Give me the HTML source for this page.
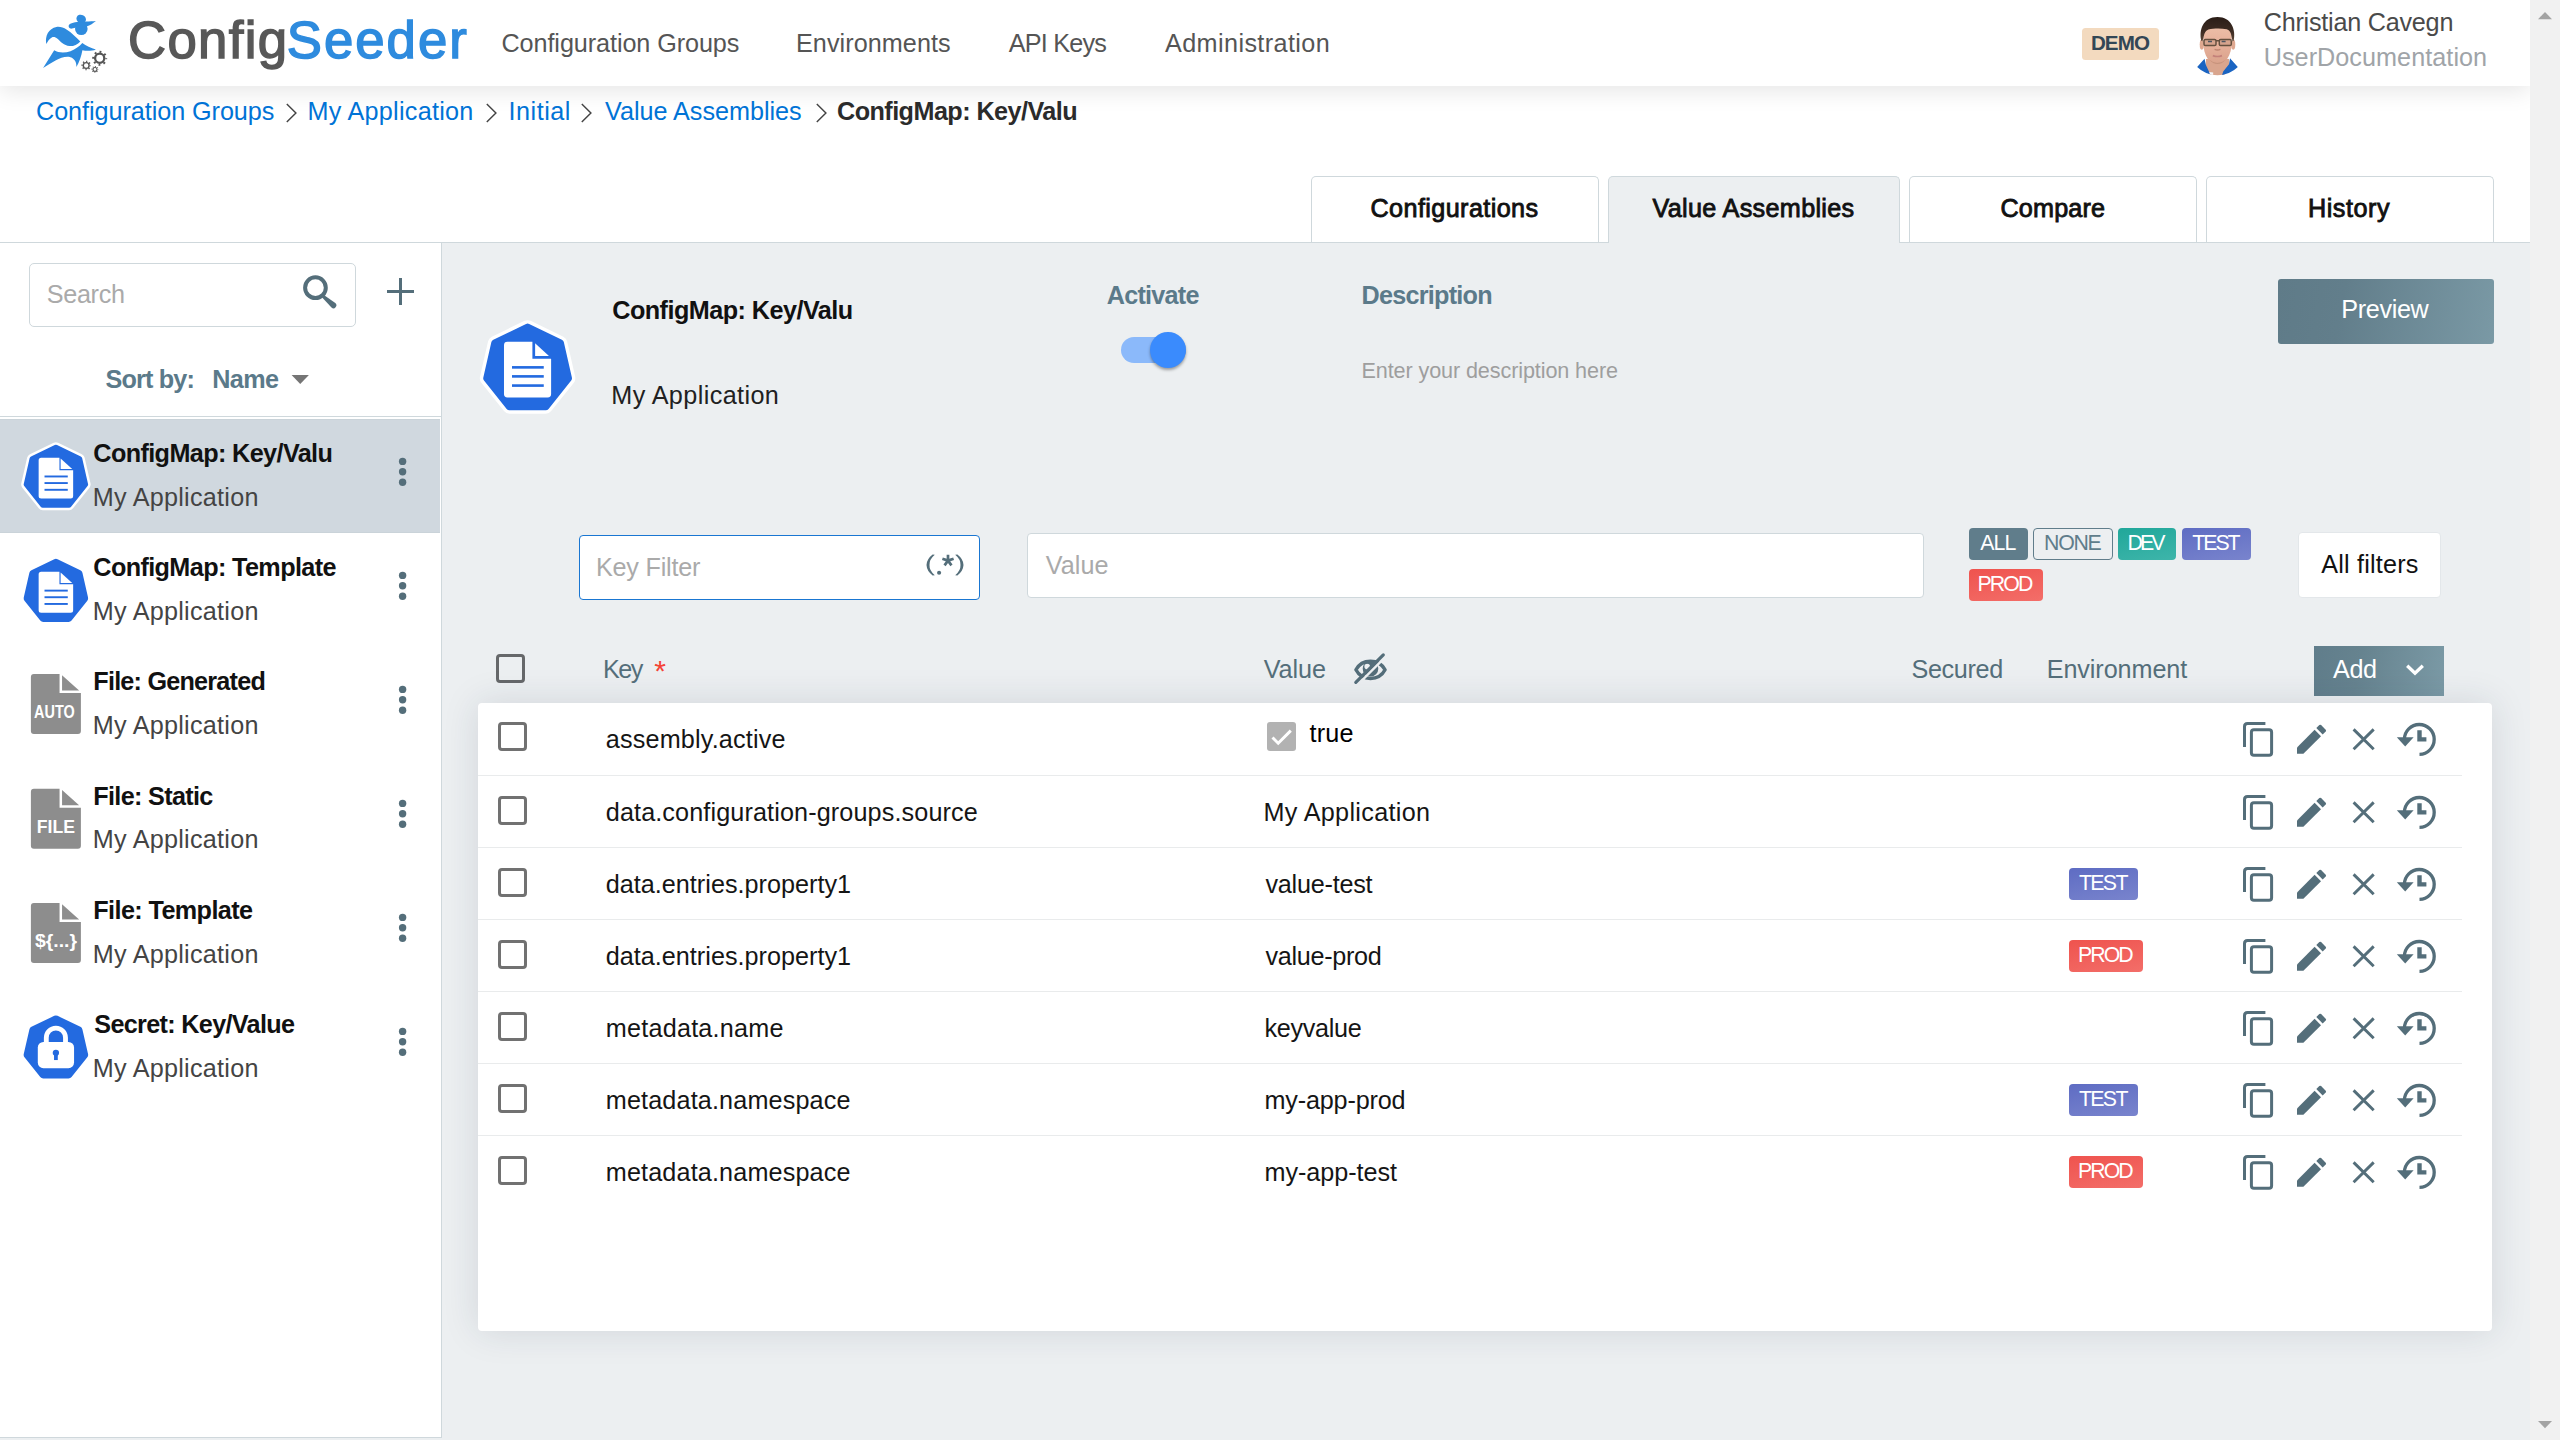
<!DOCTYPE html>
<html><head><meta charset="utf-8"><title>ConfigSeeder</title>
<style>
html,body{margin:0;padding:0;}
body{width:2560px;height:1440px;overflow:hidden;background:#fff;position:relative;font-family:"Liberation Sans",sans-serif;}
.t{position:absolute;white-space:pre;font-family:"Liberation Sans",sans-serif;}
.a{position:absolute;box-sizing:border-box;}
svg{position:absolute;overflow:visible;}

</style></head>
<body>
<div class="a" style="left:442px;top:243px;width:2088px;height:1197px;background:#eceff1;"></div>
<div class="a" style="left:0px;top:1438px;width:442px;height:2px;background:#eceff1;"></div>
<div class="a" style="left:0px;top:0px;width:2530px;height:86px;background:#fff;box-shadow:0 5px 22px rgba(0,0,0,0.10);"></div>
<div class="a" style="left:0px;top:242px;width:2530px;height:1px;background:#cfd8dc;"></div>
<div class="a" style="left:1311px;top:176px;width:288px;height:66px;background:#fff;border:1px solid #cfd8dc;border-bottom:none;border-radius:5px 5px 0 0;"></div>
<div class="a" style="left:1608px;top:176px;width:292px;height:67px;background:#eceff1;border:1px solid #cfd8dc;border-bottom:none;border-radius:5px 5px 0 0;"></div>
<div class="a" style="left:1909px;top:176px;width:288px;height:66px;background:#fff;border:1px solid #cfd8dc;border-bottom:none;border-radius:5px 5px 0 0;"></div>
<div class="a" style="left:2206px;top:176px;width:288px;height:66px;background:#fff;border:1px solid #cfd8dc;border-bottom:none;border-radius:5px 5px 0 0;"></div>
<div class="a" style="left:441px;top:243px;width:1px;height:1195px;background:#cfd8dc;"></div>
<div class="a" style="left:0px;top:1437px;width:442px;height:1px;background:#cfd8dc;"></div>
<div class="a" style="left:29px;top:263px;width:327px;height:64px;background:#fff;border:1px solid #cfd8dc;border-radius:5px;"></div>
<svg style="left:296px;top:268px" width="48" height="48" viewBox="296 268 48 48"><circle cx="315.45" cy="287.65" r="10.35" fill="none" stroke="#546e7a" stroke-width="4"/><path d="M322.15 297.6 L324.25 295.2 L335.3 303.1 A2.9 2.9 0 0 1 331.5 307.5 Z" fill="#546e7a"/></svg>
<div class="a" style="left:387.2px;top:290px;width:26.9px;height:2.8px;background:#546e7a;"></div>
<div class="a" style="left:399.2px;top:278.1px;width:3.1px;height:26.6px;background:#546e7a;"></div>
<svg style="left:290px;top:374px" width="20" height="12" viewBox="0 0 20 12"><path d="M1.6 1.1 L18.9 1.1 L10.25 9.9 Z" fill="#757575"/></svg>
<div class="a" style="left:0px;top:416px;width:441px;height:1px;background:#cfd8dc;"></div>
<div class="a" style="left:0px;top:419px;width:440px;height:114px;background:#d0d8df;border-bottom:1px solid #cad3d9;border-top:1px solid #cad3d9;"></div>
<svg style="left:0;top:0" width="2560" height="1440" viewBox="0 0 2560 1440"><path d="M54.24 443.85 Q55.90 443.05 57.56 443.85 L81.34 455.30 Q82.99 456.10 83.40 457.89 L89.27 483.62 Q89.68 485.41 88.54 486.85 L72.08 507.48 Q70.93 508.92 69.10 508.92 L42.70 508.92 Q40.87 508.92 39.72 507.48 L23.26 486.85 Q22.12 485.41 22.53 483.62 L28.40 457.89 Q28.81 456.10 30.46 455.30 Z" fill="#236ae0" stroke="#fff" stroke-width="2.5" stroke-linejoin="round"/><path d="M41.16 457.71 L59.45 457.71 L59.45 470.15 L73.15 470.15 L73.15 495.98 Q73.15 498.49 70.64 498.49 L41.16 498.49 Q38.65 498.49 38.65 495.98 L38.65 460.22 Q38.65 457.71 41.16 457.71 Z" fill="#fff"/><path d="M60.63 458.42 L72.21 468.97 L60.63 468.97 Z" fill="#fff"/><line x1="44.51" y1="476.47" x2="67.77" y2="476.47" stroke="#236ae0" stroke-width="1.92"/><line x1="44.51" y1="483.07" x2="67.77" y2="483.07" stroke="#236ae0" stroke-width="1.92"/><line x1="44.51" y1="489.80" x2="67.77" y2="489.80" stroke="#236ae0" stroke-width="1.92"/></svg>
<svg style="left:0;top:0" width="2560" height="1440" viewBox="0 0 2560 1440"><path d="M54.24 559.25 Q55.90 558.45 57.56 559.25 L80.36 570.23 Q82.01 571.03 82.42 572.82 L88.05 597.49 Q88.46 599.28 87.32 600.72 L71.54 620.51 Q70.39 621.94 68.55 621.94 L43.25 621.94 Q41.41 621.94 40.26 620.51 L24.48 600.72 Q23.34 599.28 23.75 597.49 L29.38 572.82 Q29.79 571.03 31.44 570.23 Z" fill="#236ae0" stroke="#fff" stroke-width="0" stroke-linejoin="round"/><path d="M41.16 571.86 L59.45 571.86 L59.45 584.30 L73.15 584.30 L73.15 610.13 Q73.15 612.64 70.64 612.64 L41.16 612.64 Q38.65 612.64 38.65 610.13 L38.65 574.37 Q38.65 571.86 41.16 571.86 Z" fill="#fff"/><path d="M60.63 572.57 L72.21 583.12 L60.63 583.12 Z" fill="#fff"/><line x1="44.51" y1="590.62" x2="67.77" y2="590.62" stroke="#236ae0" stroke-width="1.92"/><line x1="44.51" y1="597.22" x2="67.77" y2="597.22" stroke="#236ae0" stroke-width="1.92"/><line x1="44.51" y1="603.95" x2="67.77" y2="603.95" stroke="#236ae0" stroke-width="1.92"/></svg>
<svg style="left:0;top:0" width="2560" height="1440" viewBox="0 0 2560 1440"><path d="M33.9 674.06 L59.55 674.06 L59.55 693.11 L80.9 693.11 L80.9 731.06 Q80.9 734.06 77.9 734.06 L33.9 734.06 Q30.9 734.06 30.9 731.06 L30.9 677.06 Q30.9 674.06 33.9 674.06 Z" fill="#8d8d8d"/><path d="M62.05 675.36 L79.10 690.61 L62.05 690.61 Z" fill="#8d8d8d"/><text x="34.10" y="717.81" font-family="Liberation Sans, sans-serif" font-weight="700" font-size="19.2" fill="#fff" textLength="40.6" lengthAdjust="spacingAndGlyphs">AUTO</text></svg>
<svg style="left:0;top:0" width="2560" height="1440" viewBox="0 0 2560 1440"><path d="M33.9 788.75 L59.55 788.75 L59.55 807.80 L80.9 807.80 L80.9 845.75 Q80.9 848.75 77.9 848.75 L33.9 848.75 Q30.9 848.75 30.9 845.75 L30.9 791.75 Q30.9 788.75 33.9 788.75 Z" fill="#8d8d8d"/><path d="M62.05 790.05 L79.10 805.30 L62.05 805.30 Z" fill="#8d8d8d"/><text x="36.77" y="832.50" font-family="Liberation Sans, sans-serif" font-weight="700" font-size="19.2" fill="#fff" textLength="38.25" lengthAdjust="spacingAndGlyphs">FILE</text></svg>
<svg style="left:0;top:0" width="2560" height="1440" viewBox="0 0 2560 1440"><path d="M33.9 903 L59.55 903 L59.55 922.05 L80.9 922.05 L80.9 960.0 Q80.9 963.0 77.9 963.0 L33.9 963.0 Q30.9 963.0 30.9 960.0 L30.9 906 Q30.9 903 33.9 903 Z" fill="#8d8d8d"/><path d="M62.05 904.30 L79.10 919.55 L62.05 919.55 Z" fill="#8d8d8d"/><text x="35.00" y="946.75" font-family="Liberation Sans, sans-serif" font-weight="700" font-size="19.2" fill="#fff" textLength="42" lengthAdjust="spacingAndGlyphs">${...}</text></svg>
<svg style="left:0;top:0" width="2560" height="1440" viewBox="0 0 2560 1440"><path d="M54.24 1015.85 Q55.90 1015.05 57.56 1015.85 L80.36 1026.83 Q82.01 1027.63 82.42 1029.42 L88.05 1054.09 Q88.46 1055.88 87.32 1057.32 L71.54 1077.11 Q70.39 1078.54 68.55 1078.54 L43.25 1078.54 Q41.41 1078.54 40.26 1077.11 L24.48 1057.32 Q23.34 1055.88 23.75 1054.09 L29.38 1029.42 Q29.79 1027.63 31.44 1026.83 Z" fill="#236ae0" stroke="#fff" stroke-width="0" stroke-linejoin="round"/><path d="M46.30 1043.95 L46.30 1037.65 A9.6 9.6 0 0 1 65.50 1037.65 L65.50 1043.95" fill="none" stroke="#fff" stroke-width="4.85"/><rect x="37.80" y="1041.95" width="36.26" height="26.20" rx="5.6" fill="#fff"/><circle cx="55.90" cy="1052.85" r="3.15" fill="#236ae0"/><rect x="54.03" y="1052.85" width="3.75" height="7.2" fill="#236ae0"/></svg>
<svg style="left:0;top:0" width="2560" height="1440" viewBox="0 0 2560 1440"><circle cx="402.6" cy="461.4" r="3.7" fill="#546e7a"/><circle cx="402.6" cy="471.8" r="3.7" fill="#546e7a"/><circle cx="402.6" cy="482.2" r="3.7" fill="#546e7a"/></svg>
<svg style="left:0;top:0" width="2560" height="1440" viewBox="0 0 2560 1440"><circle cx="402.6" cy="575.4" r="3.7" fill="#546e7a"/><circle cx="402.6" cy="585.8" r="3.7" fill="#546e7a"/><circle cx="402.6" cy="596.2" r="3.7" fill="#546e7a"/></svg>
<svg style="left:0;top:0" width="2560" height="1440" viewBox="0 0 2560 1440"><circle cx="402.6" cy="689.4" r="3.7" fill="#546e7a"/><circle cx="402.6" cy="699.8" r="3.7" fill="#546e7a"/><circle cx="402.6" cy="710.2" r="3.7" fill="#546e7a"/></svg>
<svg style="left:0;top:0" width="2560" height="1440" viewBox="0 0 2560 1440"><circle cx="402.6" cy="803.4" r="3.7" fill="#546e7a"/><circle cx="402.6" cy="813.8" r="3.7" fill="#546e7a"/><circle cx="402.6" cy="824.2" r="3.7" fill="#546e7a"/></svg>
<svg style="left:0;top:0" width="2560" height="1440" viewBox="0 0 2560 1440"><circle cx="402.6" cy="917.4" r="3.7" fill="#546e7a"/><circle cx="402.6" cy="927.8" r="3.7" fill="#546e7a"/><circle cx="402.6" cy="938.2" r="3.7" fill="#546e7a"/></svg>
<svg style="left:0;top:0" width="2560" height="1440" viewBox="0 0 2560 1440"><circle cx="402.6" cy="1031.4" r="3.7" fill="#546e7a"/><circle cx="402.6" cy="1041.8" r="3.7" fill="#546e7a"/><circle cx="402.6" cy="1052.2" r="3.7" fill="#546e7a"/></svg>
<svg style="left:0;top:0" width="2560" height="1440" viewBox="0 0 2560 1440"><path d="M525.32 322.40 Q527.60 321.30 529.88 322.40 L562.61 338.16 Q564.89 339.26 565.46 341.73 L573.54 377.15 Q574.10 379.61 572.53 381.59 L549.87 410.00 Q548.30 411.98 545.77 411.98 L509.43 411.98 Q506.90 411.98 505.33 410.00 L482.67 381.59 Q481.10 379.61 481.66 377.15 L489.74 341.73 Q490.31 339.26 492.59 338.16 Z" fill="#236ae0" stroke="#fff" stroke-width="3.4" stroke-linejoin="round"/><path d="M507.42 341.75 L532.40 341.75 L532.40 358.74 L551.11 358.74 L551.11 394.02 Q551.11 397.45 547.68 397.45 L507.42 397.45 Q503.99 397.45 503.99 394.02 L503.99 345.18 Q503.99 341.75 507.42 341.75 Z" fill="#fff"/><path d="M535.10 343.37 L548.95 356.04 L535.10 356.04 Z" fill="#fff"/><line x1="512.00" y1="367.37" x2="543.76" y2="367.37" stroke="#236ae0" stroke-width="2.62"/><line x1="512.00" y1="376.39" x2="543.76" y2="376.39" stroke="#236ae0" stroke-width="2.62"/><line x1="512.00" y1="385.58" x2="543.76" y2="385.58" stroke="#236ae0" stroke-width="2.62"/></svg>
<div class="a" style="left:1120.75px;top:337px;width:64.8px;height:26px;background:#8bb9fa;border-radius:13px;"></div>
<div class="a" style="left:1150px;top:332px;width:35.8px;height:35.8px;background:#3a8bfd;border-radius:50%;box-shadow:0 2px 3px rgba(0,0,0,0.35);"></div>
<div class="a" style="left:2278px;top:279px;width:216px;height:65px;background:linear-gradient(100deg,#5f7b88 0%,#627e8b 30%,#7a99a5 100%);border-radius:3px;"></div>
<div class="a" style="left:578.5px;top:535px;width:401.5px;height:65px;background:#fff;border:1.5px solid #1976d2;border-radius:4px;"></div>
<div class="a" style="left:1027px;top:533px;width:896.5px;height:65px;background:#fff;border:1px solid #cfd8dc;border-radius:4px;"></div>
<svg style="left:920px;top:548px" width="50" height="34" viewBox="920 548 50 34"><path d="M933.2 554.8 Q927.6 559.5 927.9 565 Q927.6 570.5 933.2 575.2 L931 575.4 Q925.2 571 924.9 565 Q925.2 559 931 554.6 Z" fill="#546e7a" transform="translate(1.6 0)"/><path d="M956.8 554.8 Q962.4 559.5 962.1 565 Q962.4 570.5 956.8 575.2 L959 575.4 Q964.8 571 965.1 565 Q964.8 559 959 554.6 Z" fill="#546e7a" transform="translate(-1.6 0)"/><circle cx="939.1" cy="572.8" r="2.05" fill="#546e7a"/><path d="M948.00 560.60 L948.00 554.70 M948.00 560.60 L953.61 558.78 M948.00 560.60 L951.47 565.37 M948.00 560.60 L944.53 565.37 M948.00 560.60 L942.39 558.78 " stroke="#546e7a" stroke-width="2.7" fill="none"/></svg>
<div class="a" style="left:1968.8px;top:528px;width:58.799999999999955px;height:31.799999999999955px;background:#607d8b;border-radius:4px;"></div>
<div class="a" style="left:2033.1px;top:528px;width:79.80000000000018px;height:31.799999999999955px;background:#eceff1;border-radius:4px;border:1px solid #607d8b;"></div>
<div class="a" style="left:2117.9px;top:528px;width:58.19999999999982px;height:31.799999999999955px;background:linear-gradient(168deg,#20a79a,#3eb5aa);border-radius:4px;"></div>
<div class="a" style="left:2181.8px;top:528px;width:69.19999999999982px;height:31.799999999999955px;background:linear-gradient(168deg,#5e6cc3,#7984cd);border-radius:4px;"></div>
<div class="a" style="left:1968.8px;top:569px;width:74.10000000000014px;height:32px;background:linear-gradient(168deg,#ef534e,#f36e69);border-radius:4px;"></div>
<div class="a" style="left:2297.5px;top:532.3px;width:143.8px;height:66.1px;background:#fff;border:1px solid #e3e7ea;border-radius:4px;"></div>
<div class="a" style="left:496px;top:654px;width:29px;height:29px;border:3.5px solid #66686a;border-radius:4px;background:transparent;"></div>
<svg style="left:1350px;top:650px" width="42" height="38" viewBox="1350 650 42 38"><path d="M1355.9 669.8 C1362 658.4 1379 658.4 1385.1 669.8 C1379 681.3 1362 681.3 1355.9 669.8 Z" fill="none" stroke="#546e7a" stroke-width="3.4" stroke-linejoin="round"/><path fill-rule="evenodd" d="M1362.7 668.75 a7.8 7.8 0 1 0 15.6 0 a7.8 7.8 0 1 0 -15.6 0 Z M1364.4 666.6 a2.8 2.8 0 1 0 5.6 0 a2.8 2.8 0 1 0 -5.6 0 Z" fill="#546e7a"/><line x1="1358.2" y1="684.2" x2="1385" y2="657.4" stroke="#eceff1" stroke-width="2.4"/><line x1="1355.8" y1="682.3" x2="1383.3" y2="654.9" stroke="#546e7a" stroke-width="3.2" stroke-linecap="round"/></svg>
<div class="a" style="left:2314px;top:646px;width:130px;height:50px;background:linear-gradient(100deg,#607d8b 0%,#66838f 35%,#7b9aa6 100%);"></div>
<svg style="left:2404px;top:662px" width="24" height="16" viewBox="2404 662 24 16"><path d="M2407.2 665.8 L2415 673.3 L2422.8 665.8" fill="none" stroke="#fff" stroke-width="3.3"/></svg>
<div class="a" style="left:478px;top:703px;width:2014px;height:628px;background:#fff;border-radius:4px;box-shadow:0 0 36px rgba(30,50,70,0.13);"></div>
<div class="a" style="left:478px;top:775px;width:1984px;height:1px;background:#e9ebec;"></div>
<div class="a" style="left:498px;top:722px;width:29px;height:29px;border:3.5px solid #717171;border-radius:4px;background:transparent;"></div>
<div class="a" style="left:478px;top:847px;width:1984px;height:1px;background:#e9ebec;"></div>
<div class="a" style="left:498px;top:796px;width:29px;height:29px;border:3.5px solid #717171;border-radius:4px;background:transparent;"></div>
<div class="a" style="left:478px;top:919px;width:1984px;height:1px;background:#e9ebec;"></div>
<div class="a" style="left:498px;top:868px;width:29px;height:29px;border:3.5px solid #717171;border-radius:4px;background:transparent;"></div>
<div class="a" style="left:478px;top:991px;width:1984px;height:1px;background:#e9ebec;"></div>
<div class="a" style="left:498px;top:940px;width:29px;height:29px;border:3.5px solid #717171;border-radius:4px;background:transparent;"></div>
<div class="a" style="left:478px;top:1063px;width:1984px;height:1px;background:#e9ebec;"></div>
<div class="a" style="left:498px;top:1012px;width:29px;height:29px;border:3.5px solid #717171;border-radius:4px;background:transparent;"></div>
<div class="a" style="left:478px;top:1135px;width:1984px;height:1px;background:#e9ebec;"></div>
<div class="a" style="left:498px;top:1084px;width:29px;height:29px;border:3.5px solid #717171;border-radius:4px;background:transparent;"></div>
<div class="a" style="left:498px;top:1156px;width:29px;height:29px;border:3.5px solid #717171;border-radius:4px;background:transparent;"></div>
<div class="a" style="left:1267px;top:722px;width:28.5px;height:29px;background:#b2b2b2;border-radius:3px;"></div>
<svg style="left:1267px;top:722px" width="29" height="29" viewBox="0 0 29 29"><path d="M5.5 15.5 L11.2 21.2 L23.8 8.6" fill="none" stroke="#fff" stroke-width="2.9"/></svg>
<div class="a" style="left:2068.9px;top:868px;width:69.09999999999991px;height:32px;background:linear-gradient(168deg,#5e6cc3,#7984cd);border-radius:4px;"></div>
<div class="a" style="left:2068.9px;top:940px;width:74.0px;height:32px;background:linear-gradient(168deg,#ef534e,#f36e69);border-radius:4px;"></div>
<div class="a" style="left:2068.9px;top:1084px;width:69.09999999999991px;height:32px;background:linear-gradient(168deg,#5e6cc3,#7984cd);border-radius:4px;"></div>
<div class="a" style="left:2068.9px;top:1156px;width:74.0px;height:32px;background:linear-gradient(168deg,#ef534e,#f36e69);border-radius:4px;"></div>
<svg style="left:0;top:0px" width="2560" height="800" viewBox="0 0 2560 800"><path d="M2265.4 723.5 L2247.5 723.5 Q2244.5 723.5 2244.5 726.5 L2244.5 747.1" fill="none" stroke="#546e7a" stroke-width="3"/><rect x="2251.4" y="729.7" width="20.2" height="25.6" rx="2.5" fill="none" stroke="#546e7a" stroke-width="3"/><path d="M2297 753.8 L2297 747.4 L2314.6 729.8 L2321 736.2 L2303.4 753.8 Z" fill="#546e7a"/><path d="M2316.3 728.1 L2319.3 725.1 Q2320.2 724.3 2321.1 725.1 L2325.7 729.7 Q2326.5 730.6 2325.7 731.5 L2322.7 734.5 Z" fill="#546e7a"/><path d="M2353.6 729.4 L2373.7 749.3 M2373.7 729.4 L2353.6 749.3" fill="none" stroke="#546e7a" stroke-width="2.9"/><path d="M2404.4 739.4 A14.9 14.9 0 1 1 2419.5 754.3" fill="none" stroke="#546e7a" stroke-width="3.3"/><path d="M2396.8 737.3 L2413.6 737.3 L2405.2 746.4 Z" fill="#546e7a"/><path d="M2419.5 730.2 L2419.5 739.4 L2426.4 739.4" fill="none" stroke="#546e7a" stroke-width="4.4"/></svg>
<svg style="left:0;top:73px" width="2560" height="800" viewBox="0 0 2560 800"><path d="M2265.4 723.5 L2247.5 723.5 Q2244.5 723.5 2244.5 726.5 L2244.5 747.1" fill="none" stroke="#546e7a" stroke-width="3"/><rect x="2251.4" y="729.7" width="20.2" height="25.6" rx="2.5" fill="none" stroke="#546e7a" stroke-width="3"/><path d="M2297 753.8 L2297 747.4 L2314.6 729.8 L2321 736.2 L2303.4 753.8 Z" fill="#546e7a"/><path d="M2316.3 728.1 L2319.3 725.1 Q2320.2 724.3 2321.1 725.1 L2325.7 729.7 Q2326.5 730.6 2325.7 731.5 L2322.7 734.5 Z" fill="#546e7a"/><path d="M2353.6 729.4 L2373.7 749.3 M2373.7 729.4 L2353.6 749.3" fill="none" stroke="#546e7a" stroke-width="2.9"/><path d="M2404.4 739.4 A14.9 14.9 0 1 1 2419.5 754.3" fill="none" stroke="#546e7a" stroke-width="3.3"/><path d="M2396.8 737.3 L2413.6 737.3 L2405.2 746.4 Z" fill="#546e7a"/><path d="M2419.5 730.2 L2419.5 739.4 L2426.4 739.4" fill="none" stroke="#546e7a" stroke-width="4.4"/></svg>
<svg style="left:0;top:145px" width="2560" height="800" viewBox="0 0 2560 800"><path d="M2265.4 723.5 L2247.5 723.5 Q2244.5 723.5 2244.5 726.5 L2244.5 747.1" fill="none" stroke="#546e7a" stroke-width="3"/><rect x="2251.4" y="729.7" width="20.2" height="25.6" rx="2.5" fill="none" stroke="#546e7a" stroke-width="3"/><path d="M2297 753.8 L2297 747.4 L2314.6 729.8 L2321 736.2 L2303.4 753.8 Z" fill="#546e7a"/><path d="M2316.3 728.1 L2319.3 725.1 Q2320.2 724.3 2321.1 725.1 L2325.7 729.7 Q2326.5 730.6 2325.7 731.5 L2322.7 734.5 Z" fill="#546e7a"/><path d="M2353.6 729.4 L2373.7 749.3 M2373.7 729.4 L2353.6 749.3" fill="none" stroke="#546e7a" stroke-width="2.9"/><path d="M2404.4 739.4 A14.9 14.9 0 1 1 2419.5 754.3" fill="none" stroke="#546e7a" stroke-width="3.3"/><path d="M2396.8 737.3 L2413.6 737.3 L2405.2 746.4 Z" fill="#546e7a"/><path d="M2419.5 730.2 L2419.5 739.4 L2426.4 739.4" fill="none" stroke="#546e7a" stroke-width="4.4"/></svg>
<svg style="left:0;top:217px" width="2560" height="800" viewBox="0 0 2560 800"><path d="M2265.4 723.5 L2247.5 723.5 Q2244.5 723.5 2244.5 726.5 L2244.5 747.1" fill="none" stroke="#546e7a" stroke-width="3"/><rect x="2251.4" y="729.7" width="20.2" height="25.6" rx="2.5" fill="none" stroke="#546e7a" stroke-width="3"/><path d="M2297 753.8 L2297 747.4 L2314.6 729.8 L2321 736.2 L2303.4 753.8 Z" fill="#546e7a"/><path d="M2316.3 728.1 L2319.3 725.1 Q2320.2 724.3 2321.1 725.1 L2325.7 729.7 Q2326.5 730.6 2325.7 731.5 L2322.7 734.5 Z" fill="#546e7a"/><path d="M2353.6 729.4 L2373.7 749.3 M2373.7 729.4 L2353.6 749.3" fill="none" stroke="#546e7a" stroke-width="2.9"/><path d="M2404.4 739.4 A14.9 14.9 0 1 1 2419.5 754.3" fill="none" stroke="#546e7a" stroke-width="3.3"/><path d="M2396.8 737.3 L2413.6 737.3 L2405.2 746.4 Z" fill="#546e7a"/><path d="M2419.5 730.2 L2419.5 739.4 L2426.4 739.4" fill="none" stroke="#546e7a" stroke-width="4.4"/></svg>
<svg style="left:0;top:289px" width="2560" height="800" viewBox="0 0 2560 800"><path d="M2265.4 723.5 L2247.5 723.5 Q2244.5 723.5 2244.5 726.5 L2244.5 747.1" fill="none" stroke="#546e7a" stroke-width="3"/><rect x="2251.4" y="729.7" width="20.2" height="25.6" rx="2.5" fill="none" stroke="#546e7a" stroke-width="3"/><path d="M2297 753.8 L2297 747.4 L2314.6 729.8 L2321 736.2 L2303.4 753.8 Z" fill="#546e7a"/><path d="M2316.3 728.1 L2319.3 725.1 Q2320.2 724.3 2321.1 725.1 L2325.7 729.7 Q2326.5 730.6 2325.7 731.5 L2322.7 734.5 Z" fill="#546e7a"/><path d="M2353.6 729.4 L2373.7 749.3 M2373.7 729.4 L2353.6 749.3" fill="none" stroke="#546e7a" stroke-width="2.9"/><path d="M2404.4 739.4 A14.9 14.9 0 1 1 2419.5 754.3" fill="none" stroke="#546e7a" stroke-width="3.3"/><path d="M2396.8 737.3 L2413.6 737.3 L2405.2 746.4 Z" fill="#546e7a"/><path d="M2419.5 730.2 L2419.5 739.4 L2426.4 739.4" fill="none" stroke="#546e7a" stroke-width="4.4"/></svg>
<svg style="left:0;top:361px" width="2560" height="800" viewBox="0 0 2560 800"><path d="M2265.4 723.5 L2247.5 723.5 Q2244.5 723.5 2244.5 726.5 L2244.5 747.1" fill="none" stroke="#546e7a" stroke-width="3"/><rect x="2251.4" y="729.7" width="20.2" height="25.6" rx="2.5" fill="none" stroke="#546e7a" stroke-width="3"/><path d="M2297 753.8 L2297 747.4 L2314.6 729.8 L2321 736.2 L2303.4 753.8 Z" fill="#546e7a"/><path d="M2316.3 728.1 L2319.3 725.1 Q2320.2 724.3 2321.1 725.1 L2325.7 729.7 Q2326.5 730.6 2325.7 731.5 L2322.7 734.5 Z" fill="#546e7a"/><path d="M2353.6 729.4 L2373.7 749.3 M2373.7 729.4 L2353.6 749.3" fill="none" stroke="#546e7a" stroke-width="2.9"/><path d="M2404.4 739.4 A14.9 14.9 0 1 1 2419.5 754.3" fill="none" stroke="#546e7a" stroke-width="3.3"/><path d="M2396.8 737.3 L2413.6 737.3 L2405.2 746.4 Z" fill="#546e7a"/><path d="M2419.5 730.2 L2419.5 739.4 L2426.4 739.4" fill="none" stroke="#546e7a" stroke-width="4.4"/></svg>
<svg style="left:0;top:433px" width="2560" height="800" viewBox="0 0 2560 800"><path d="M2265.4 723.5 L2247.5 723.5 Q2244.5 723.5 2244.5 726.5 L2244.5 747.1" fill="none" stroke="#546e7a" stroke-width="3"/><rect x="2251.4" y="729.7" width="20.2" height="25.6" rx="2.5" fill="none" stroke="#546e7a" stroke-width="3"/><path d="M2297 753.8 L2297 747.4 L2314.6 729.8 L2321 736.2 L2303.4 753.8 Z" fill="#546e7a"/><path d="M2316.3 728.1 L2319.3 725.1 Q2320.2 724.3 2321.1 725.1 L2325.7 729.7 Q2326.5 730.6 2325.7 731.5 L2322.7 734.5 Z" fill="#546e7a"/><path d="M2353.6 729.4 L2373.7 749.3 M2373.7 729.4 L2353.6 749.3" fill="none" stroke="#546e7a" stroke-width="2.9"/><path d="M2404.4 739.4 A14.9 14.9 0 1 1 2419.5 754.3" fill="none" stroke="#546e7a" stroke-width="3.3"/><path d="M2396.8 737.3 L2413.6 737.3 L2405.2 746.4 Z" fill="#546e7a"/><path d="M2419.5 730.2 L2419.5 739.4 L2426.4 739.4" fill="none" stroke="#546e7a" stroke-width="4.4"/></svg>
<div class="a" style="left:2530px;top:0px;width:30px;height:1440px;background:#f1f1f1;"></div>
<svg style="left:2536px;top:10px" width="18" height="12" viewBox="2536 10 18 12"><path d="M2538 19.2 L2552 19.2 L2545 12 Z" fill="#a3a3a3"/></svg>
<svg style="left:2536px;top:1419px" width="18" height="12" viewBox="2536 1419 18 12"><path d="M2538 1421 L2552 1421 L2545 1428.2 Z" fill="#a3a3a3"/></svg>
<div class="a" style="left:2082px;top:28px;width:77.1px;height:32px;background:#f3dabf;border-radius:3.5px;"></div>
<svg style="left:283.5px;top:101px" width="16" height="24" viewBox="283.5 101 16 24"><path d="M286.3 104 L295.4 112.9 L286.3 121.9" fill="none" stroke="#444" stroke-width="1.45"/></svg>
<svg style="left:484.25px;top:101px" width="16" height="24" viewBox="484.25 101 16 24"><path d="M487.05 104 L496.15 112.9 L487.05 121.9" fill="none" stroke="#444" stroke-width="1.45"/></svg>
<svg style="left:579.25px;top:101px" width="16" height="24" viewBox="579.25 101 16 24"><path d="M582.05 104 L591.15 112.9 L582.05 121.9" fill="none" stroke="#444" stroke-width="1.45"/></svg>
<svg style="left:813.5px;top:101px" width="16" height="24" viewBox="813.5 101 16 24"><path d="M816.3 104 L825.4 112.9 L816.3 121.9" fill="none" stroke="#444" stroke-width="1.45"/></svg><svg style="left:0;top:0" width="140" height="86" viewBox="0 0 140 86">
 <g fill="#2e8bde">
  <ellipse cx="81.2" cy="19" rx="4.9" ry="4.2" transform="rotate(25 81.2 19)"/>
  <path d="M69.3 24.6 C72 22.6 78 21.4 86 21.6 C89.5 21.6 93 21.4 95.9 21.1 C93.5 23.2 90 25.6 86.5 26.6 C82 27 76 27.6 72 28.6 C69.5 29.1 67.6 26.4 69.3 24.6 Z"/>
  <circle cx="81.3" cy="28.7" r="6.3"/>
  <path d="M46.3 44 C44.8 36 48.5 28.6 56.5 27 C63 26 69 31 73.5 35 C76 37.2 78.2 39.4 80.3 41.4 C77.5 44.6 73.5 46.3 69.5 46.1 C64 45.6 60.5 41.6 57.5 38.8 C55.5 37 53.6 36.6 51.8 37.4 C49.3 38.6 47.6 41.5 46.3 44 Z"/>
  <path d="M43.1 67.9 L54.2 50.3 C58.5 52.9 64.5 53.2 70.5 51.2 C75.5 49.4 79.5 46.4 82.3 43.1 C86 46 91 48.4 95.9 49.4 C92 51.1 86.5 51.2 82.4 50.2 C81.5 56 79.2 62 76.4 67 C76.6 62 74.5 58.6 70.5 57.2 C66 56 60.5 57.8 55.5 60.4 C51 62.8 47 65.4 43.1 67.9 Z"/>
 </g>
 <g fill="none" stroke="#555">
  <circle cx="99.7" cy="58.3" r="4.6" stroke-width="2.3"/>
  <circle cx="99.7" cy="58.3" r="6.5" stroke-width="2" stroke-dasharray="1.9 3.205" stroke-dashoffset="0.95"/>
  <circle cx="86.2" cy="65.5" r="2.9" stroke-width="1.4"/>
  <circle cx="86.2" cy="65.5" r="4.1" stroke-width="1.5" stroke-dasharray="1.2 2.02" stroke-dashoffset="0.6"/>
  <circle cx="95" cy="69.4" r="1.95" stroke-width="1.1"/>
  <circle cx="95" cy="69.4" r="2.9" stroke-width="1.1" stroke-dasharray="0.9 1.378" stroke-dashoffset="0.45"/>
 </g>
</svg>
<svg style="left:2186px;top:14px;filter:blur(0.55px)" width="64" height="64" viewBox="2186 14 64 64">
 <defs><clipPath id="av"><circle cx="2217.5" cy="45.6" r="29.6"/></clipPath>
 <linearGradient id="hairg" x1="0" y1="0" x2="0" y2="1"><stop offset="0" stop-color="#2a1d17"/><stop offset="0.6" stop-color="#3d2c23"/><stop offset="1" stop-color="#5b4536"/></linearGradient>
 <linearGradient id="faceg" x1="0" y1="0" x2="0" y2="1"><stop offset="0" stop-color="#ecbfa8"/><stop offset="0.5" stop-color="#e6b09a"/><stop offset="1" stop-color="#d9a28b"/></linearGradient></defs>
 <g clip-path="url(#av)">
  <rect x="2186" y="14" width="64" height="64" fill="#fff"/>
  <path d="M2206 59 L2229 59 L2229.5 66 L2224 78 L2210 78 L2205.8 66 Z" fill="#d9a58e"/>
  <path d="M2196.7 67.4 L2204.5 58.8 L2206 65.3 L2209.2 72 L2212 78 L2190 78 Z" fill="#1a64c2"/>
  <path d="M2237.8 67.1 L2230 58.3 L2229 64.3 L2223.2 71.5 L2221 78 L2246 78 Z" fill="#1a64c2"/>
  <path d="M2209.2 72 L2213.2 72.6 L2213 78 L2211 78 Z" fill="#f4f6fa"/>
  <ellipse cx="2201.8" cy="44.6" rx="2.1" ry="5.2" fill="#dfa890"/>
  <ellipse cx="2233.2" cy="44.6" rx="2.1" ry="5.2" fill="#dfa890"/>
  <path d="M2203.2 33 C2203.2 23 2231.8 23 2231.8 33 L2231.4 47 C2230.8 53 2228.4 58.4 2224.6 61.8 C2222.4 63.8 2220 64.4 2217.5 64.4 C2215 64.4 2212.6 63.8 2210.4 61.8 C2206.6 58.4 2204.2 53 2203.6 47 Z" fill="url(#faceg)"/>
  <path d="M2209 59.5 Q2217.5 66.5 2226 59.5 Q2217.5 68.5 2209 59.5 Z" fill="#c08e78" opacity="0.8"/>
  <path d="M2201.4 41 C2198.6 30 2203 16.9 2217.5 16.9 C2231.6 16.9 2236.2 30 2233.6 41 C2232.8 41.4 2231.9 39.4 2231.5 36.4 C2231 32.6 2229.6 30.2 2226.8 29.3 C2221 28.3 2213.6 28.4 2208.4 29.5 C2205.8 30.3 2204.4 32.8 2203.7 36.4 C2203.3 39.4 2202.4 41.4 2201.4 41 Z" fill="url(#hairg)"/>
  <rect x="2204" y="39.6" width="12" height="5.9" rx="1.3" fill="rgba(120,90,70,0.15)" stroke="#65503f" stroke-width="1.5"/>
  <rect x="2219.3" y="39.6" width="12" height="5.9" rx="1.3" fill="rgba(120,90,70,0.15)" stroke="#65503f" stroke-width="1.5"/>
  <path d="M2216 40.8 L2219.3 40.8" stroke="#65503f" stroke-width="1.5"/>
  <path d="M2202.4 40.6 L2204 40.6 M2231.3 40.6 L2233 40.6" stroke="#8a7565" stroke-width="1.3"/>
  <path d="M2208 41.6 L2212 41.6 M2221.6 41.4 L2225.6 41.4" stroke="#4d5560" stroke-width="1.5"/>
  <path d="M2214.6 49.4 Q2217.5 50.6 2220.4 49.4" stroke="#bd8470" stroke-width="1.3" fill="none"/>
  <path d="M2212.8 55.6 Q2217.5 57.4 2222 55.6" stroke="#c4817a" stroke-width="1.7" fill="none"/>
 </g>
</svg>

<span class="t" style="left:128.00px;top:14px;font-size:52.7px;line-height:52.7px;font-weight:400;color:#585858;letter-spacing:1.350px;-webkit-text-stroke:1.5px #585858;">Config</span>
<span class="t" style="left:286.75px;top:14px;font-size:52.7px;line-height:52.7px;font-weight:400;color:#2e8bde;letter-spacing:2.030px;-webkit-text-stroke:1.5px #2e8bde;">Seeder</span>
<span class="t" style="left:501.50px;top:31px;font-size:25.2px;line-height:25.2px;font-weight:400;color:#555;letter-spacing:-0.083px;">Configuration Groups</span>
<span class="t" style="left:796.00px;top:31px;font-size:25.2px;line-height:25.2px;font-weight:400;color:#555;letter-spacing:0.055px;">Environments</span>
<span class="t" style="left:1008.75px;top:31px;font-size:25.2px;line-height:25.2px;font-weight:400;color:#555;letter-spacing:-0.785px;">API Keys</span>
<span class="t" style="left:1165.00px;top:31px;font-size:25.2px;line-height:25.2px;font-weight:400;color:#555;letter-spacing:0.398px;">Administration</span>
<span class="t" style="left:2090.90px;top:33px;font-size:20.6px;line-height:20.6px;font-weight:700;color:#334756;letter-spacing:-0.921px;">DEMO</span>
<span class="t" style="left:2263.70px;top:10px;font-size:25.2px;line-height:25.2px;font-weight:400;color:#4a4a4a;letter-spacing:-0.233px;">Christian Cavegn</span>
<span class="t" style="left:2263.70px;top:45px;font-size:25.2px;line-height:25.2px;font-weight:400;color:#a0a4a8;letter-spacing:0.051px;">UserDocumentation</span>
<span class="t" style="left:36.00px;top:99px;font-size:25.2px;line-height:25.2px;font-weight:400;color:#0073d6;letter-spacing:-0.056px;">Configuration Groups</span>
<span class="t" style="left:307.50px;top:99px;font-size:25.2px;line-height:25.2px;font-weight:400;color:#0073d6;letter-spacing:0.267px;">My Application</span>
<span class="t" style="left:508.50px;top:99px;font-size:25.2px;line-height:25.2px;font-weight:400;color:#0073d6;letter-spacing:0.508px;">Initial</span>
<span class="t" style="left:605.00px;top:99px;font-size:25.2px;line-height:25.2px;font-weight:400;color:#0073d6;letter-spacing:-0.015px;">Value Assemblies</span>
<span class="t" style="left:837.00px;top:99px;font-size:25.2px;line-height:25.2px;font-weight:700;color:#2b2b2b;letter-spacing:-0.548px;">ConfigMap: Key/Valu</span>
<span class="t" style="left:1370.50px;top:196px;font-size:25.2px;line-height:25.2px;font-weight:400;color:#111;letter-spacing:0.398px;-webkit-text-stroke:0.85px #111;">Configurations</span>
<span class="t" style="left:1652.50px;top:196px;font-size:25.2px;line-height:25.2px;font-weight:400;color:#111;letter-spacing:0.318px;-webkit-text-stroke:0.85px #111;">Value Assemblies</span>
<span class="t" style="left:2000.50px;top:196px;font-size:25.2px;line-height:25.2px;font-weight:400;color:#111;letter-spacing:0.153px;-webkit-text-stroke:0.85px #111;">Compare</span>
<span class="t" style="left:2308.00px;top:196px;font-size:25.2px;line-height:25.2px;font-weight:400;color:#111;letter-spacing:0.538px;-webkit-text-stroke:0.85px #111;">History</span>
<span class="t" style="left:46.80px;top:282px;font-size:25.2px;line-height:25.2px;font-weight:400;color:#aaa;letter-spacing:-0.339px;">Search</span>
<span class="t" style="left:105.50px;top:367px;font-size:25.2px;line-height:25.2px;font-weight:700;color:#5b7a8a;letter-spacing:-0.824px;">Sort by:</span>
<span class="t" style="left:212.20px;top:367px;font-size:25.2px;line-height:25.2px;font-weight:700;color:#5b7a8a;letter-spacing:-0.564px;">Name</span>
<span class="t" style="left:93.30px;top:441px;font-size:25.2px;line-height:25.2px;font-weight:700;color:#111;letter-spacing:-0.606px;">ConfigMap: Key/Valu</span>
<span class="t" style="left:92.70px;top:485px;font-size:25.2px;line-height:25.2px;font-weight:400;color:#444;letter-spacing:0.255px;">My Application</span>
<span class="t" style="left:93.30px;top:555px;font-size:25.2px;line-height:25.2px;font-weight:700;color:#111;letter-spacing:-0.611px;">ConfigMap: Template</span>
<span class="t" style="left:92.70px;top:599px;font-size:25.2px;line-height:25.2px;font-weight:400;color:#444;letter-spacing:0.255px;">My Application</span>
<span class="t" style="left:93.30px;top:669px;font-size:25.2px;line-height:25.2px;font-weight:700;color:#111;letter-spacing:-0.777px;">File: Generated</span>
<span class="t" style="left:92.70px;top:713px;font-size:25.2px;line-height:25.2px;font-weight:400;color:#444;letter-spacing:0.255px;">My Application</span>
<span class="t" style="left:93.30px;top:784px;font-size:25.2px;line-height:25.2px;font-weight:700;color:#111;letter-spacing:-0.673px;">File: Static</span>
<span class="t" style="left:92.70px;top:827px;font-size:25.2px;line-height:25.2px;font-weight:400;color:#444;letter-spacing:0.255px;">My Application</span>
<span class="t" style="left:93.30px;top:898px;font-size:25.2px;line-height:25.2px;font-weight:700;color:#111;letter-spacing:-0.598px;">File: Template</span>
<span class="t" style="left:92.70px;top:942px;font-size:25.2px;line-height:25.2px;font-weight:400;color:#444;letter-spacing:0.255px;">My Application</span>
<span class="t" style="left:94.30px;top:1012px;font-size:25.2px;line-height:25.2px;font-weight:700;color:#111;letter-spacing:-0.669px;">Secret: Key/Value</span>
<span class="t" style="left:92.70px;top:1056px;font-size:25.2px;line-height:25.2px;font-weight:400;color:#444;letter-spacing:0.255px;">My Application</span>
<span class="t" style="left:612.25px;top:298px;font-size:25.2px;line-height:25.2px;font-weight:700;color:#111;letter-spacing:-0.534px;">ConfigMap: Key/Valu</span>
<span class="t" style="left:611.25px;top:383px;font-size:25.2px;line-height:25.2px;font-weight:400;color:#212121;letter-spacing:0.401px;">My Application</span>
<span class="t" style="left:1106.75px;top:283px;font-size:25.2px;line-height:25.2px;font-weight:700;color:#5b7a8a;letter-spacing:-0.748px;">Activate</span>
<span class="t" style="left:1361.50px;top:283px;font-size:25.2px;line-height:25.2px;font-weight:700;color:#5b7a8a;letter-spacing:-0.742px;">Description</span>
<span class="t" style="left:1361.50px;top:360px;font-size:21.6px;line-height:21.6px;font-weight:400;color:#9e9e9e;letter-spacing:-0.106px;">Enter your description here</span>
<span class="t" style="left:2341.30px;top:297px;font-size:25.2px;line-height:25.2px;font-weight:400;color:#fff;letter-spacing:-0.349px;">Preview</span>
<span class="t" style="left:596.00px;top:555px;font-size:25.2px;line-height:25.2px;font-weight:400;color:#aaa;letter-spacing:-0.220px;">Key Filter</span>
<span class="t" style="left:1045.75px;top:553px;font-size:25.2px;line-height:25.2px;font-weight:400;color:#aaa;letter-spacing:0.052px;">Value</span>
<span class="t" style="left:1980.30px;top:533px;font-size:21.3px;line-height:21.3px;font-weight:400;color:#fff;letter-spacing:-0.975px;">ALL</span>
<span class="t" style="left:2044.10px;top:533px;font-size:21.3px;line-height:21.3px;font-weight:400;color:#607d8b;letter-spacing:-1.308px;">NONE</span>
<span class="t" style="left:2127.50px;top:533px;font-size:21.3px;line-height:21.3px;font-weight:400;color:#fff;letter-spacing:-2.892px;">DEV</span>
<span class="t" style="left:2192.20px;top:533px;font-size:21.3px;line-height:21.3px;font-weight:400;color:#fff;letter-spacing:-2.006px;">TEST</span>
<span class="t" style="left:1977.40px;top:574px;font-size:21.3px;line-height:21.3px;font-weight:400;color:#fff;letter-spacing:-1.817px;">PROD</span>
<span class="t" style="left:2321.30px;top:552px;font-size:25.2px;line-height:25.2px;font-weight:400;color:#111;letter-spacing:0.193px;">All filters</span>
<span class="t" style="left:603.00px;top:657px;font-size:25.2px;line-height:25.2px;font-weight:400;color:#546e7a;letter-spacing:-1.529px;">Key</span>
<span class="t" style="left:654.25px;top:656px;font-size:30px;line-height:30px;font-weight:400;color:#f44336;letter-spacing:0.000px;">*</span>
<span class="t" style="left:1263.75px;top:657px;font-size:25.2px;line-height:25.2px;font-weight:400;color:#546e7a;letter-spacing:-0.073px;">Value</span>
<span class="t" style="left:1911.50px;top:657px;font-size:25.2px;line-height:25.2px;font-weight:400;color:#546e7a;letter-spacing:-0.351px;">Secured</span>
<span class="t" style="left:2046.70px;top:657px;font-size:25.2px;line-height:25.2px;font-weight:400;color:#546e7a;letter-spacing:-0.080px;">Environment</span>
<span class="t" style="left:2333.00px;top:657px;font-size:25.2px;line-height:25.2px;font-weight:400;color:#fff;letter-spacing:-0.404px;">Add</span>
<span class="t" style="left:605.75px;top:727px;font-size:25.2px;line-height:25.2px;font-weight:400;color:#151515;letter-spacing:0.175px;">assembly.active</span>
<span class="t" style="left:605.75px;top:800px;font-size:25.2px;line-height:25.2px;font-weight:400;color:#151515;letter-spacing:0.121px;">data.configuration-groups.source</span>
<span class="t" style="left:1263.50px;top:800px;font-size:25.2px;line-height:25.2px;font-weight:400;color:#151515;letter-spacing:0.324px;">My Application</span>
<span class="t" style="left:605.75px;top:872px;font-size:25.2px;line-height:25.2px;font-weight:400;color:#151515;letter-spacing:0.011px;">data.entries.property1</span>
<span class="t" style="left:1265.50px;top:872px;font-size:25.2px;line-height:25.2px;font-weight:400;color:#151515;letter-spacing:-0.245px;">value-test</span>
<span class="t" style="left:2078.90px;top:873px;font-size:21.3px;line-height:21.3px;font-weight:400;color:#fff;letter-spacing:-1.640px;">TEST</span>
<span class="t" style="left:605.75px;top:944px;font-size:25.2px;line-height:25.2px;font-weight:400;color:#151515;letter-spacing:0.011px;">data.entries.property1</span>
<span class="t" style="left:1265.50px;top:944px;font-size:25.2px;line-height:25.2px;font-weight:400;color:#151515;letter-spacing:-0.306px;">value-prod</span>
<span class="t" style="left:2078.10px;top:945px;font-size:21.3px;line-height:21.3px;font-weight:400;color:#fff;letter-spacing:-1.983px;">PROD</span>
<span class="t" style="left:605.75px;top:1016px;font-size:25.2px;line-height:25.2px;font-weight:400;color:#151515;letter-spacing:0.228px;">metadata.name</span>
<span class="t" style="left:1264.50px;top:1016px;font-size:25.2px;line-height:25.2px;font-weight:400;color:#151515;letter-spacing:-0.307px;">keyvalue</span>
<span class="t" style="left:605.75px;top:1088px;font-size:25.2px;line-height:25.2px;font-weight:400;color:#151515;letter-spacing:0.149px;">metadata.namespace</span>
<span class="t" style="left:1264.50px;top:1088px;font-size:25.2px;line-height:25.2px;font-weight:400;color:#151515;letter-spacing:-0.178px;">my-app-prod</span>
<span class="t" style="left:2078.90px;top:1089px;font-size:21.3px;line-height:21.3px;font-weight:400;color:#fff;letter-spacing:-1.640px;">TEST</span>
<span class="t" style="left:605.75px;top:1160px;font-size:25.2px;line-height:25.2px;font-weight:400;color:#151515;letter-spacing:0.149px;">metadata.namespace</span>
<span class="t" style="left:1264.50px;top:1160px;font-size:25.2px;line-height:25.2px;font-weight:400;color:#151515;letter-spacing:-0.047px;">my-app-test</span>
<span class="t" style="left:2078.10px;top:1161px;font-size:21.3px;line-height:21.3px;font-weight:400;color:#fff;letter-spacing:-1.983px;">PROD</span>
<span class="t" style="left:1309.50px;top:721px;font-size:25.2px;line-height:25.2px;font-weight:400;color:#000;letter-spacing:0.202px;">true</span>
</body></html>
